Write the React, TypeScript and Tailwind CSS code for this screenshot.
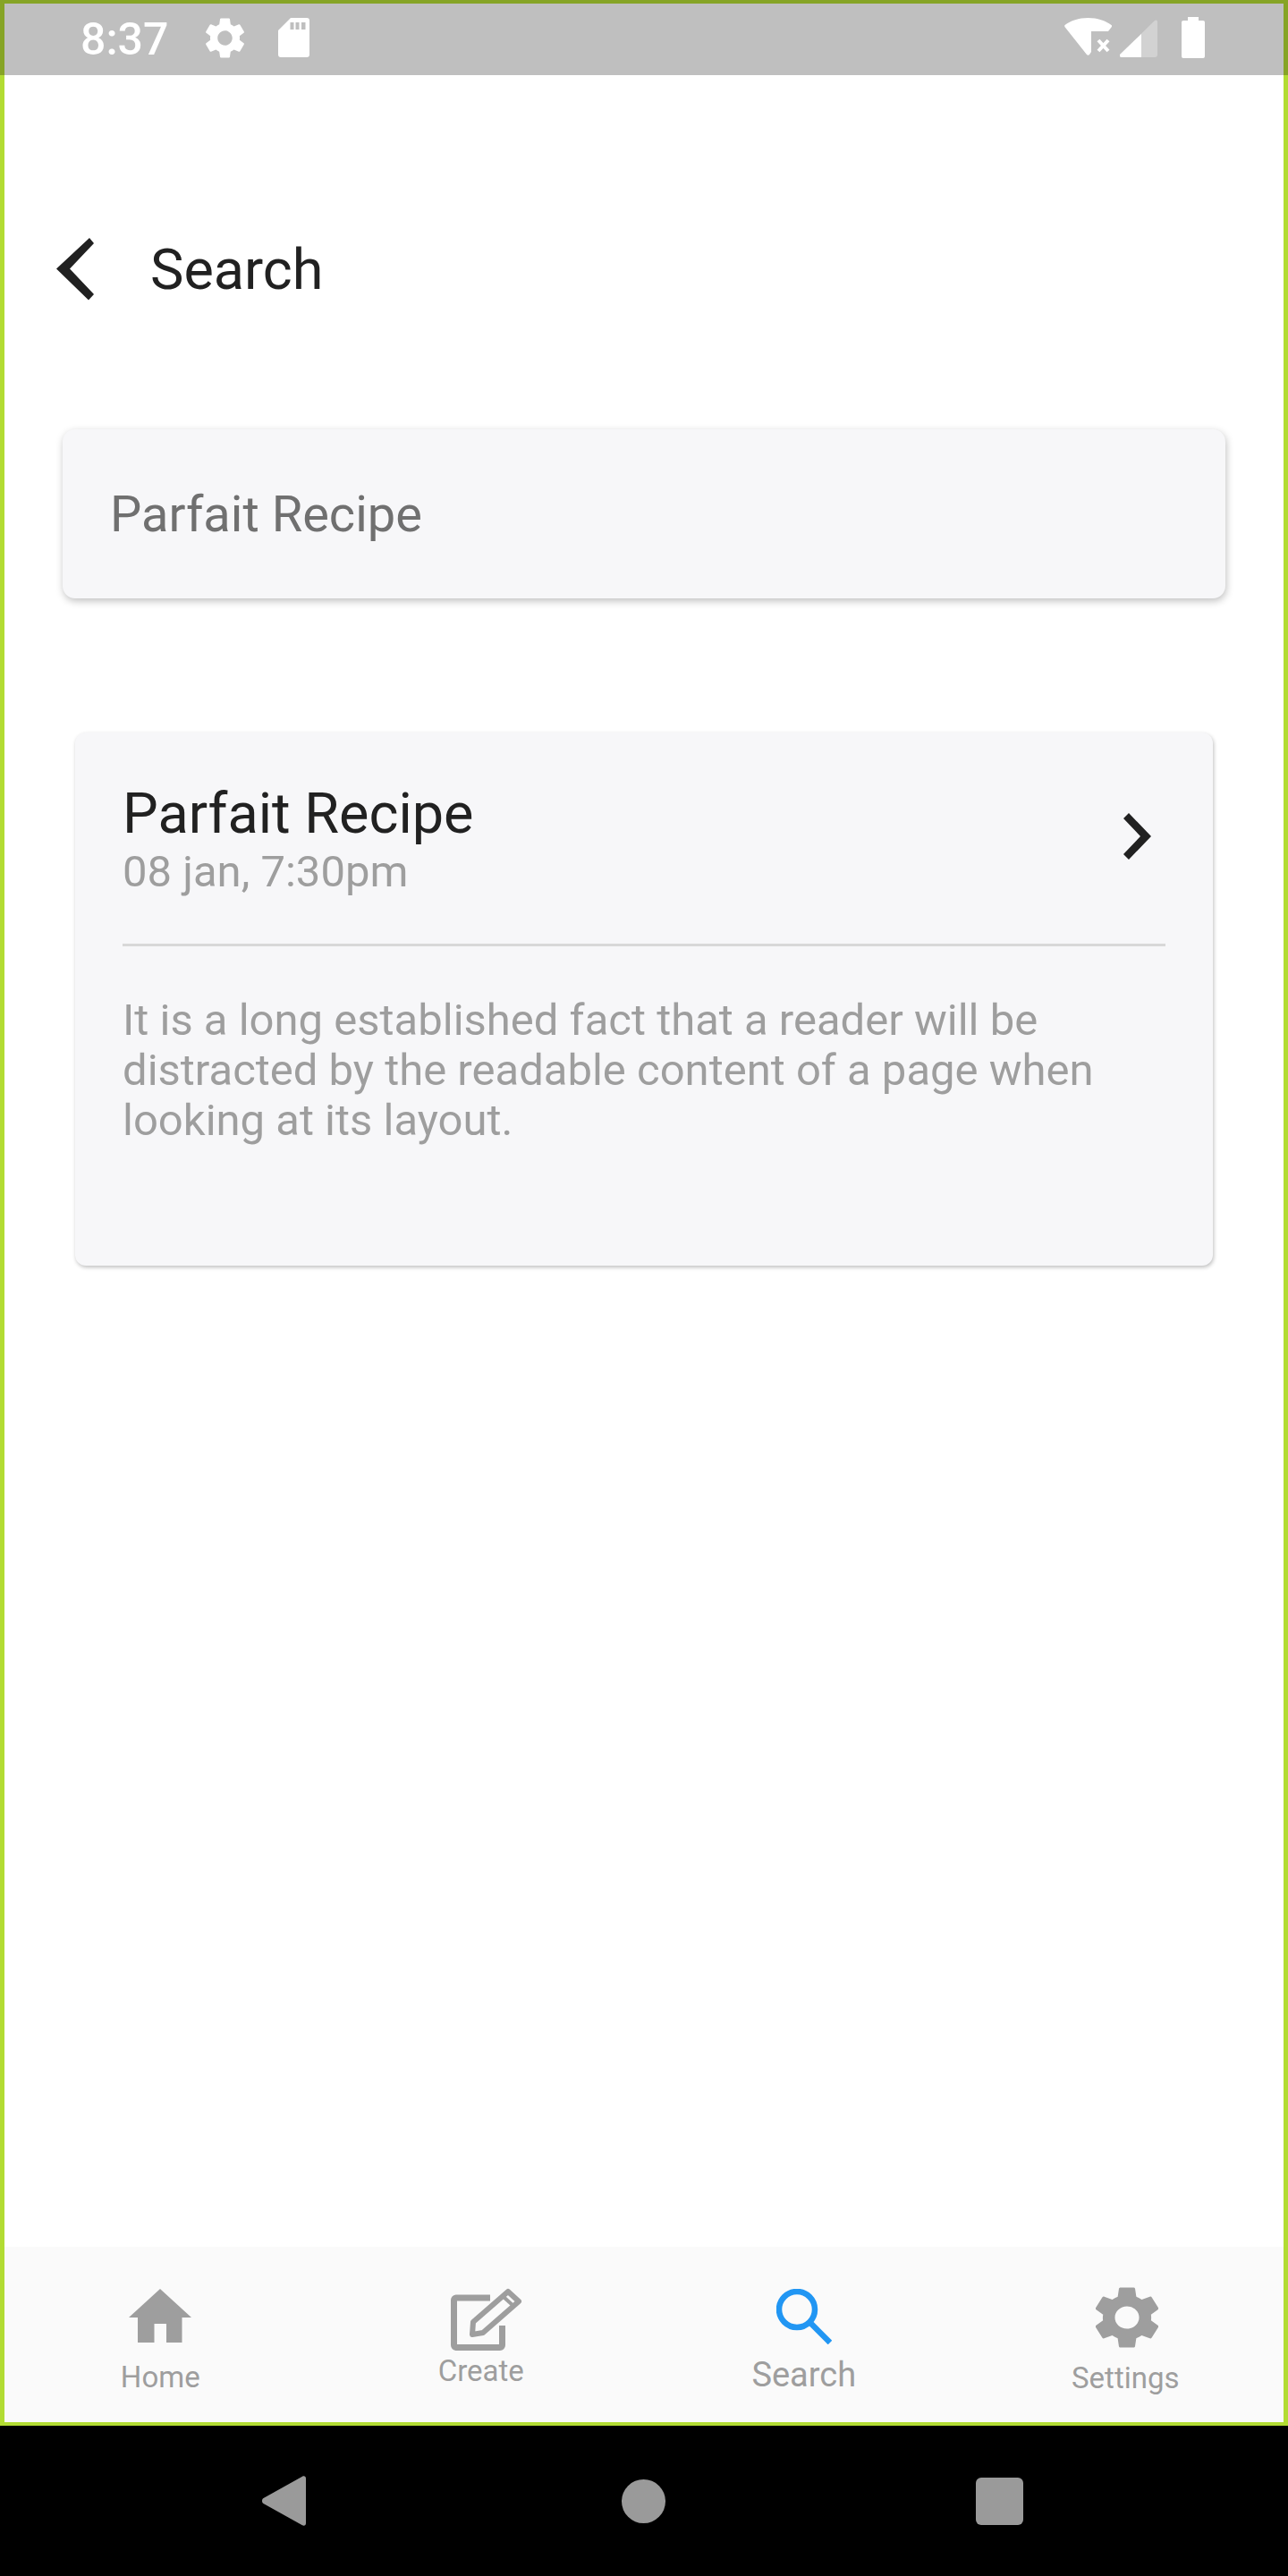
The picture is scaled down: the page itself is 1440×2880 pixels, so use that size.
import type { ReactNode } from 'react';

function NavItem({ label, className, labelClass, icon }: { label: string; className: string; labelClass: string; icon: ReactNode }) {
  return (
    <div className={`flex w-1/4 shrink-0 flex-col items-center ${className}`}>
      {icon}
      <span className={labelClass}>{label}</span>
    </div>
  );
}

const gear =
  'M19.14 12.94c.04-.3.06-.61.06-.94 0-.32-.02-.64-.07-.94l2.03-1.58a.49.49 0 0 0 .12-.61l-1.92-3.32a.488.488 0 0 0-.59-.22l-2.39.96c-.5-.38-1.03-.7-1.62-.94l-.36-2.54a.484.484 0 0 0-.48-.41h-3.84c-.24 0-.43.17-.47.41l-.36 2.54c-.59.24-1.13.57-1.62.94l-2.39-.96c-.22-.08-.47 0-.59.22L2.74 8.87c-.12.21-.08.47.12.61l2.03 1.58c-.05.3-.09.63-.09.94s.02.64.07.94l-2.03 1.58a.49.49 0 0 0-.12.61l1.92 3.32c.12.22.37.29.59.22l2.39-.96c.5.38 1.03.7 1.62.94l.36 2.54c.05.24.24.41.48.41h3.84c.24 0 .44-.17.47-.41l.36-2.54c.59-.24 1.13-.56 1.62-.94l2.39.96c.22.08.47 0 .59-.22l1.92-3.32c.12-.22.07-.47-.12-.61l-2.01-1.58zM12 15.6c-1.98 0-3.6-1.62-3.6-3.6s1.62-3.6 3.6-3.6 3.6 1.62 3.6 3.6-1.62 3.6-3.6 3.6z';

export default function App() {
  return (
    <div className="flex h-[2880px] w-[1440px] flex-col bg-black font-['Roboto',sans-serif]">
      <div className="flex h-[2712px] flex-col border-x-[5px] border-y-[4px] border-[#b2dc33] bg-white">
        <div className="-mx-[5px] -mt-[4px] flex h-[84px] items-center border-x-[5px] border-t-[4px] border-[#86a426] bg-[#bfbfbf] pl-[85px] pr-[88px]">
          <span className="w-[100px] text-[50px] font-medium leading-[50px] text-white">8:37</span>
          <svg viewBox="0 0 24 24" className="mb-[4px] ml-[34px] h-[55px] w-[55px] fill-white">
            <path d={gear} />
          </svg>
          <svg viewBox="0 0 35 44" className="mb-[4px] ml-[32px] h-[44px] w-[35px] fill-white">
            <path
              fillRule="evenodd"
              d="M14 0H32a3 3 0 0 1 3 3V41a3 3 0 0 1-3 3H3a3 3 0 0 1-3-3V14zM13.500 5V13H17.500V5zM19.500 5V13H23.500V5zM26 5V13H30.500V5z"
            />
          </svg>
          <div className="mb-[4px] ml-auto flex items-center">
            <svg viewBox="0 0 53 42" className="mb-[2px] h-[42px] w-[53px]">
              <path
                fill="#ffffff"
                d="M26.500 0C37 0 46 3 52.500 8C53.200 8.600 53.200 9.500 52.700 10.200L49 15H30V38L28 41C27.200 42 25.800 42 25 41L.6 10.200C0 9.500 0 8.600 .6 8C7 3 16 0 26.500 0z"
              />
              <path d="M38 25 49 37M49 25 38 37" stroke="#ffffff" strokeWidth="4" fill="none" />
            </svg>
            <svg viewBox="0 0 42 42" className="ml-[9px] mt-[2px] h-[42px] w-[42px]">
              <path d="M0 39 39 1C40 0 42 .5 42 2V39A3 3 0 0 1 39 42H2C0 42-1 40 0 39z" fill="#ffffff" fillOpacity="0.3" />
              <path d="M0 39 24 16V42H2C0 42-1 40 0 39z" fill="#ffffff" />
            </svg>
            <svg viewBox="0 0 26 46" className="ml-[27px] h-[46px] w-[26px] fill-white">
              <path d="M7 0H19V4H24A2 2 0 0 1 26 6V44A2 2 0 0 1 24 46H2A2 2 0 0 1 0 44V6A2 2 0 0 1 2 4H7z" />
            </svg>
          </div>
        </div>

        <div className="flex flex-1 flex-col">
          <div className="mt-[182px] flex h-[70px] items-center pl-[58px]">
            <svg viewBox="0 0 42 70" className="h-[70px] w-[42px] fill-[#212121]">
              <path d="M37 0 42 6 15 34.500 42 63 36 69.500 0 34.500z" />
            </svg>
            <span className="ml-[63px] mt-[2px] text-[63px] leading-[70px] text-[#212121]">Search</span>
          </div>

          <div className="ml-[65px] mr-[65px] mt-[144px] flex h-[189px] items-center rounded-[14px] bg-[#f7f7f9] px-[53px] shadow-[1px_3px_8px_rgba(0,0,0,0.25)]">
            <span className="mt-[1px] text-[56px] leading-[64px] text-[#707070]">Parfait Recipe</span>
          </div>

          <div className="ml-[79px] mr-[79px] mt-[150px] flex h-[596px] flex-col rounded-[12px] bg-[#f7f7f9] px-[53px] pt-[57px] shadow-[1px_2px_4px_rgba(0,0,0,0.25)]">
            <div className="flex items-start justify-between border-b-[3px] border-[#d8d8d8] pb-[52px]">
              <div className="flex flex-col">
                <span className="text-[63px] leading-[68px] text-[#212121]">Parfait Recipe</span>
                <span className="mt-[3px] text-[49px] leading-[56px] text-[#9e9e9e]">08 jan, 7:30pm</span>
              </div>
              <svg viewBox="0 0 31 52" className="mr-[16px] mt-[33px] h-[52px] w-[31px] fill-[#212121]">
                <path d="M6 0 31 26 6 52 0 46 19 26 0 6z" />
              </svg>
            </div>
            <p className="mt-[55px] text-[49px] leading-[56px] text-[#9e9e9e]">
              It is a long established fact that a reader will be distracted by the readable content of a page when looking at its layout.
            </p>
          </div>
        </div>

        <div className="flex h-[196px] bg-[#fafafa]">
          <NavItem
            label="Home"
            className="pr-[9px]"
            labelClass="mt-[19px] text-[33px] leading-[40px] text-[#9e9e9e]"
            icon={
              <svg viewBox="0 0 70 60" className="mt-[47px] h-[60px] w-[70px] fill-[#9e9e9e]">
                <path d="M35 0 70 32H59.500V60H42V39H28.500V60H10V32H0z" />
              </svg>
            }
          />
          <NavItem
            label="Create"
            className="pr-[7px]"
            labelClass="mt-[3px] text-[33px] leading-[40px] text-[#9e9e9e]"
            icon={
              <svg viewBox="0 0 80 70" className="ml-[13px] mt-[46px] h-[70px] w-[80px] fill-none stroke-[#9e9e9e]">
                <path d="M44 11H6A2.500 2.500 0 0 0 3.500 13.500V64A2.500 2.500 0 0 0 6 66.500H55A2.500 2.500 0 0 0 57.500 64V42" strokeWidth="7" />
                <path d="M64 4 76 15 36 50 24 52 25 38z" strokeLinejoin="round" strokeWidth="6" />
                <path d="M59 10 70 20" strokeWidth="4" />
              </svg>
            }
          />
          <NavItem
            label="Search"
            className=""
            labelClass="mt-[11px] text-[38px] leading-[46px] text-[#9e9e9e]"
            icon={
              <svg viewBox="0 0 62 62" className="mt-[47px] h-[62px] w-[62px] fill-none stroke-[#2196f3]">
                <circle cx="23" cy="23" r="20" strokeWidth="6.500" />
                <path d="M39 39 60 60" strokeWidth="6.500" />
              </svg>
            }
          />
          <NavItem
            label="Settings"
            className="pl-[4px]"
            labelClass="mt-[13px] text-[33px] leading-[40px] text-[#9e9e9e]"
            icon={
              <svg viewBox="2.7 2 18.6 20" preserveAspectRatio="none" className="ml-[3px] mt-[44px] h-[70px] w-[70px] fill-[#9e9e9e]">
                <path d={gear} />
              </svg>
            }
          />
        </div>
      </div>

      <div className="flex flex-1 items-center justify-center pr-[3px]">
        <svg viewBox="0 0 49 56" className="h-[56px] w-[49px] fill-[#9a9a9a]">
          <path d="M1.500 25 45 .8C47 -.3 49 .5 49 3V53C49 55.500 47 56.300 45 55.200L1.500 31C-.5 30-.5 26 1.500 25z" />
        </svg>
        <div className="ml-[353px] h-[49px] w-[49px] rounded-full bg-[#9a9a9a]" />
        <div className="ml-[347px] h-[53px] w-[53px] rounded-[6px] bg-[#9a9a9a]" />
      </div>
    </div>
  );
}
